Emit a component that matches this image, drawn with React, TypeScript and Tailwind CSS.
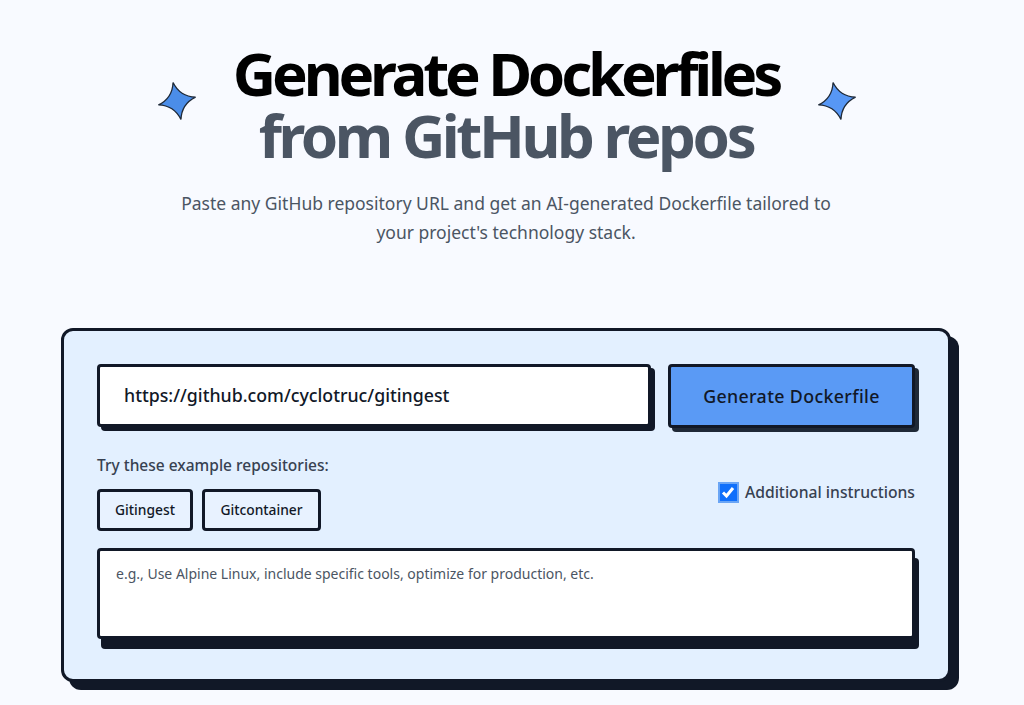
import React from "react";

const Star = ({ className, fill }: { className: string; fill: string }) => (
  <svg viewBox="0 0 40 40" className={className} aria-hidden="true">
    <path
      d="M20 1 C22.500 11 29 17.500 39 20 C29 22.500 22.500 29 20 39 C17.500 29 11 22.500 1 20 C11 17.500 17.500 11 20 1 Z"
      fill={fill}
      stroke="#1f2937"
      strokeWidth="1.300"
      strokeLinejoin="miter"
    />
  </svg>
);

export default function App() {
  return (
    <div className="h-[705px] w-[1024px] overflow-hidden bg-[#f8faff] font-['Noto_Sans','Open_Sans',sans-serif]">
      <div className="flex w-[1012px] flex-col items-center pt-[42px]">
        <div className="relative flex w-[700px] flex-col items-center">
          <h1 className="text-center text-[60px] font-bold leading-[62px] tracking-[-4.200px] text-black">
            Generate Dockerfiles
            <span className="block tracking-[-3.450px] text-[#4b5563]">from GitHub repos</span>
          </h1>
          <Star fill="#4b8de8" className="absolute left-[1px] top-[39px] h-[40px] w-[40px] rotate-[-12deg]" />
          <Star fill="#5797f5" className="absolute right-[-1px] top-[39px] h-[40px] w-[40px] rotate-[-12deg]" />
        </div>
        <p className="mt-[23px] w-[672px] text-center text-[17.500px] leading-[29px] text-[#4b5563]">
          Paste any GitHub repository URL and get an AI-generated Dockerfile tailored to your project's technology stack.
        </p>

        <div className="mt-[81px] w-[890px] rounded-xl border-[3px] border-[#111827] bg-[#e3f0ff] px-[33px] pb-[40px] pt-[33px] shadow-[8px_8px_0_0_#111827]">
          <div className="flex gap-[17px]">
            <div className="flex h-[63px] w-[554px] items-center rounded-[4px] border-[3px] border-[#111827] bg-white pl-[24px] text-[17.750px] font-medium text-[#111827] shadow-[4px_4px_0_0_#111827]">
              https://github.com/cyclotruc/gitingest
            </div>
            <button className="h-[64px] w-[247px] rounded-[4px] border-[3px] border-[#111827] bg-[#5a9af5] text-[17.800px] font-medium tracking-[0.02em] text-[#111827] shadow-[4px_4px_0_0_#1f2937]">
              Generate Dockerfile
            </button>
          </div>

          <div className="mt-[26px] flex items-center justify-between">
            <div>
              <p className="text-[15.500px] font-medium leading-[22px] text-[#374151]">Try these example repositories:</p>
              <div className="mt-[13px] flex gap-[9px]">
                <button className="flex h-[42px] w-[96px] items-center justify-center rounded-[4px] border-[3px] border-[#111827] bg-[#e8f2ff] pt-[1px] text-[13.800px] font-medium text-[#111827]">
                  Gitingest
                </button>
                <button className="flex h-[42px] w-[119px] items-center justify-center rounded-[4px] border-[3px] border-[#111827] bg-[#e8f2ff] pt-[1px] text-[13.800px] font-medium text-[#111827]">
                  Gitcontainer
                </button>
              </div>
            </div>
            <label className="flex items-center gap-[6px]">
              <span className="flex h-[21px] w-[21px] items-center justify-center border-2 border-[#6aa5f5] bg-[#0f6ffb]">
                <svg viewBox="0 0 16 16" className="h-[16px] w-[16px]" aria-hidden="true">
                  <path d="M3 8.500 L6.500 12 L13 4" fill="none" stroke="white" strokeWidth="3" />
                </svg>
              </span>
              <span className="text-[15.700px] font-medium text-[#374151]">Additional instructions</span>
            </label>
          </div>

          <div className="mt-[17px] h-[91px] rounded-[4px] border-[3px] border-[#111827] bg-white px-[16px] pt-[13px] text-[14px] leading-[20px] text-[#4b5563] shadow-[4px_10px_0_0_#111827]">
            e.g., Use Alpine Linux, include specific tools, optimize for production, etc.
          </div>
        </div>
      </div>
    </div>
  );
}
